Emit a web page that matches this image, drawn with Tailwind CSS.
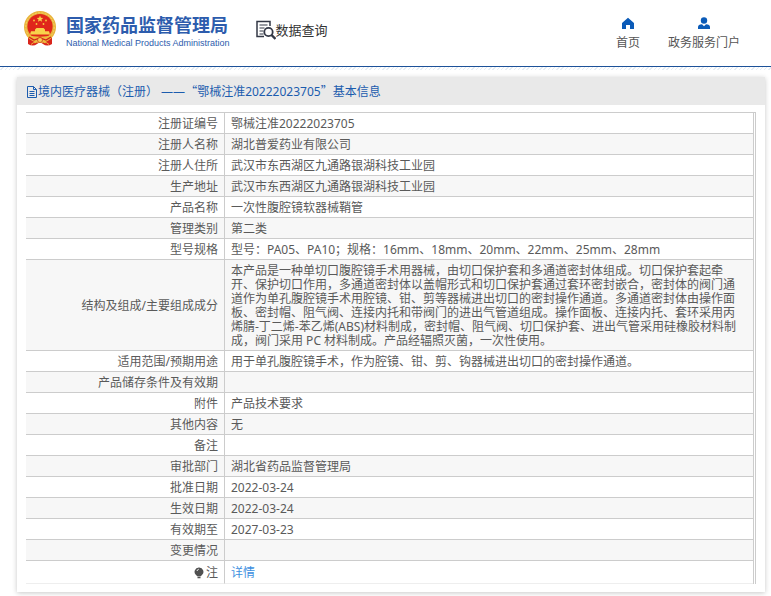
<!DOCTYPE html>
<html lang="zh-CN">
<head>
<meta charset="utf-8">
<meta name="viewport" content="width=device-width, initial-scale=1">
<title>国家药品监督管理局 数据查询</title>
<script src="https://cdn.jsdelivr.net/npm/@tailwindcss/browser@4"></script>
</head>
<body class="bg-white font-['Noto_Sans','Noto_Sans_CJK_SC',sans-serif] text-xs text-[#5a5a5a]">
<header class="flex h-[67px] items-start justify-between border-b border-[#1d5299] pl-6 pr-[31px]">
  <div class="flex items-start">
    <a href="#" class="flex items-start gap-[10px] pt-[11px]" aria-label="国家药品监督管理局">
      <svg class="h-9 w-8 shrink-0" viewBox="0 0 32 36" aria-hidden="true">
        <path d="M4 24 4 33q5 3 9 0l3-2 3 2q4 3 9 0l0-9z" fill="#d9251c"/>
        <circle cx="16" cy="16" r="16" fill="#e9b43d"/>
        <circle cx="16" cy="16" r="14.2" fill="none" stroke="#f6d568" stroke-width="1" stroke-dasharray="2 1.4"/>
        <circle cx="16" cy="15.5" r="12.6" fill="#e0261b"/>
        <path d="m16 4.500.9 2.300 2.400.1-1.900 1.500.7 2.400-2.100-1.400-2.100 1.400.7-2.400-1.900-1.500 2.400-.1z" fill="#f8d24b"/>
        <g fill="#f8c93f"><circle cx="10" cy="9.500" r=".9"/><circle cx="22" cy="9.500" r=".9"/><circle cx="12.500" cy="13" r=".9"/><circle cx="19.500" cy="13" r=".9"/></g>
        <path d="M11 18.500 12.500 17h7l1.500 1.500v1.800h4l1 3.200H6l1-3.200h4z" fill="#f8d24b"/>
        <path d="M3 24q13 3.500 26 0l-3 4q-3 1-5 3l-5-2-5 2q-2-2-5-3z" fill="#eebb3e"/>
        <path d="m5 26 5 3 6-2 6 2 5-3" fill="none" stroke="#d32118" stroke-width="1.300"/>
        <path d="M7 33.500q2-2.500 5-2m13 2q-2-2.500-5-2" fill="none" stroke="#eebb3e"/>
        <circle cx="16" cy="29" r="2.500" fill="#f6cf55" stroke="#cf2a19" stroke-width=".7"/>
      </svg>
      <span class="flex flex-col pt-[2px] text-[#2d5cad]">
        <span class="text-lg/6 font-bold whitespace-nowrap">国家药品监督管理局</span>
        <span class="font-['Liberation_Sans',sans-serif] text-[9px]/3 whitespace-nowrap">National Medical Products Administration</span>
      </span>
    </a>
    <div class="flex items-center pl-[25px] pt-5">
      <svg class="h-5 w-[21px]" viewBox="0 0 21 20" fill="none" stroke="#333846" aria-hidden="true">
        <path d="M15 6V1.500H2v15h7" stroke-width="1.500"/>
        <path d="M4.500 5h8M4.500 8h5M4.500 11h4M4.500 14h4" stroke-width="1.200"/>
        <circle cx="13.500" cy="12" r="4.200" stroke-width="1.800"/>
        <path d="m16.500 15 4 4" stroke-width="2.400"/>
      </svg>
      <span class="text-[13px]/5 whitespace-nowrap text-[#333]">数据查询</span>
    </div>
  </div>
  <nav class="flex gap-7 pt-[17px] text-[#555]">
    <a href="#" class="flex flex-col items-center gap-[5px]">
      <svg class="h-[13px] w-[14px]" viewBox="0 0 14 13" fill="#0b5bb8" aria-hidden="true"><path d="M7 .7 13 6v5.700q0 .3-.4.300H9V8H5v4H1.400q-.4 0-.4-.3V6z"/></svg>
      <span class="leading-4">首页</span>
    </a>
    <a href="#" class="flex flex-col items-center gap-[5px]">
      <svg class="h-[13px] w-[14px]" viewBox="0 0 14 13" fill="#0b5bb8" aria-hidden="true"><circle cx="7" cy="3.500" r="3.200"/><path d="M1 12V10q0-2.500 4-2.800l2 2 2-2q4 .3 4 2.800v2z"/></svg>
      <span class="leading-4">政务服务门户</span>
    </a>
  </nav>
</header>
<div class="h-[3px] bg-[repeating-linear-gradient(135deg,#ffffff_0px,#ffffff_2px,#e6edf4_2px,#e6edf4_3px)]"></div>

<main class="mt-[7px] mr-[6px] mb-1 ml-[17px] bg-white pb-2 shadow-[0_1px_5px_rgba(0,0,0,0.22)]">
  <h1 class="flex h-7 items-center bg-[#e9e9e9] pt-px pl-[9px] text-[#1c5cae]">
    <svg class="h-3 w-3 shrink-0" viewBox="0 0 12 12" fill="none" stroke="#1c5cae" aria-hidden="true"><path d="M1.500.5h6l3 3v8h-9zM7.500.5v3h3M3.500 5.500h5M3.500 7.500h5M3.500 9.500h5"/></svg>
    <span>境内医疗器械（注册） ——<span class="font-['Noto_Sans_CJK_SC',sans-serif]">“</span>鄂械注准20222023705<span class="font-['Noto_Sans_CJK_SC',sans-serif]">”</span>基本信息</span>
  </h1>
  <div class="pt-[7px] pr-[9px] pl-[9px]">
    <table class="w-full border-separate border-spacing-0 border-t border-r-3 border-t-[#ccc] border-r-[#ccc] [border-right-style:double] leading-[14px] [&_td]:border-b [&_td]:border-[#ccc] [&_td]:pt-1 [&_td]:pr-2 [&_td]:pb-[2px] [&_td]:pl-[6px] [&_th]:w-[199px] [&_th]:border-r [&_th]:border-b [&_th]:border-[#ccc] [&_th]:pt-1 [&_th]:pr-[6px] [&_th]:pb-[2px] [&_th]:text-right [&_th]:font-normal [&_tr]:h-[21px] [&_tr:nth-child(even)]:bg-[#f7f7f7]">
      <tbody>
        <tr><th scope="row">注册证编号</th><td>鄂械注准20222023705</td></tr>
        <tr><th scope="row">注册人名称</th><td>湖北普爱药业有限公司</td></tr>
        <tr><th scope="row">注册人住所</th><td>武汉市东西湖区九通路银湖科技工业园</td></tr>
        <tr><th scope="row">生产地址</th><td>武汉市东西湖区九通路银湖科技工业园</td></tr>
        <tr><th scope="row">产品名称</th><td>一次性腹腔镜软器械鞘管</td></tr>
        <tr><th scope="row">管理类别</th><td>第二类</td></tr>
        <tr><th scope="row">型号规格</th><td>型号：PA05、PA10；规格：16mm、18mm、20mm、22mm、25mm、28mm</td></tr>
        <tr><th scope="row">结构及组成/主要组成成分</th><td>本产品是一种单切口腹腔镜手术用器械，由切口保护套和多通道密封体组成。切口保护套起牵开、保护切口作用，多通道密封体以盖帽形式和切口保护套通过套环密封嵌合，密封体的阀门通道作为单孔腹腔镜手术用腔镜、钳、剪等器械进出切口的密封操作通道。多通道密封体由操作面板、密封帽、阻气阀、连接内托和带阀门的进出气管道组成。操作面板、连接内托、套环采用丙烯腈-丁二烯-苯乙烯(ABS)材料制成，密封帽、阻气阀、切口保护套、进出气管采用硅橡胶材料制成，阀门采用 PC 材料制成。产品经辐照灭菌，一次性使用。</td></tr>
        <tr><th scope="row">适用范围/预期用途</th><td>用于单孔腹腔镜手术，作为腔镜、钳、剪、钩器械进出切口的密封操作通道。</td></tr>
        <tr><th scope="row">产品储存条件及有效期</th><td></td></tr>
        <tr><th scope="row">附件</th><td>产品技术要求</td></tr>
        <tr><th scope="row">其他内容</th><td>无</td></tr>
        <tr><th scope="row">备注</th><td></td></tr>
        <tr><th scope="row">审批部门</th><td>湖北省药品监督管理局</td></tr>
        <tr><th scope="row">批准日期</th><td>2022-03-24</td></tr>
        <tr><th scope="row">生效日期</th><td>2022-03-24</td></tr>
        <tr><th scope="row">有效期至</th><td>2027-03-23</td></tr>
        <tr><th scope="row">变更情况</th><td></td></tr>
        <tr class="[&>td]:border-b-[#eee]! [&>th]:border-b-[#eee]!">
          <th scope="row"><span class="flex h-4 items-center justify-end gap-[2px]"><svg class="h-3 w-[10px]" viewBox="0 0 10 12" aria-hidden="true"><path d="M5 .5a4.300 4.300 0 0 0-3 7.500l1.300 1.200h3.400L8 8a4.300 4.300 0 0 0-3-7.500zM3.500 9.800h3v1.500h-3z" fill="#505050"/><path d="M3 4q.3-1.500 1.800-1.800" fill="none" stroke="#eee"/></svg>注</span></th>
          <td><a href="#" class="text-[#3d8fe0]">详情</a></td>
        </tr>
      </tbody>
    </table>
  </div>
</main>
</body>
</html>
